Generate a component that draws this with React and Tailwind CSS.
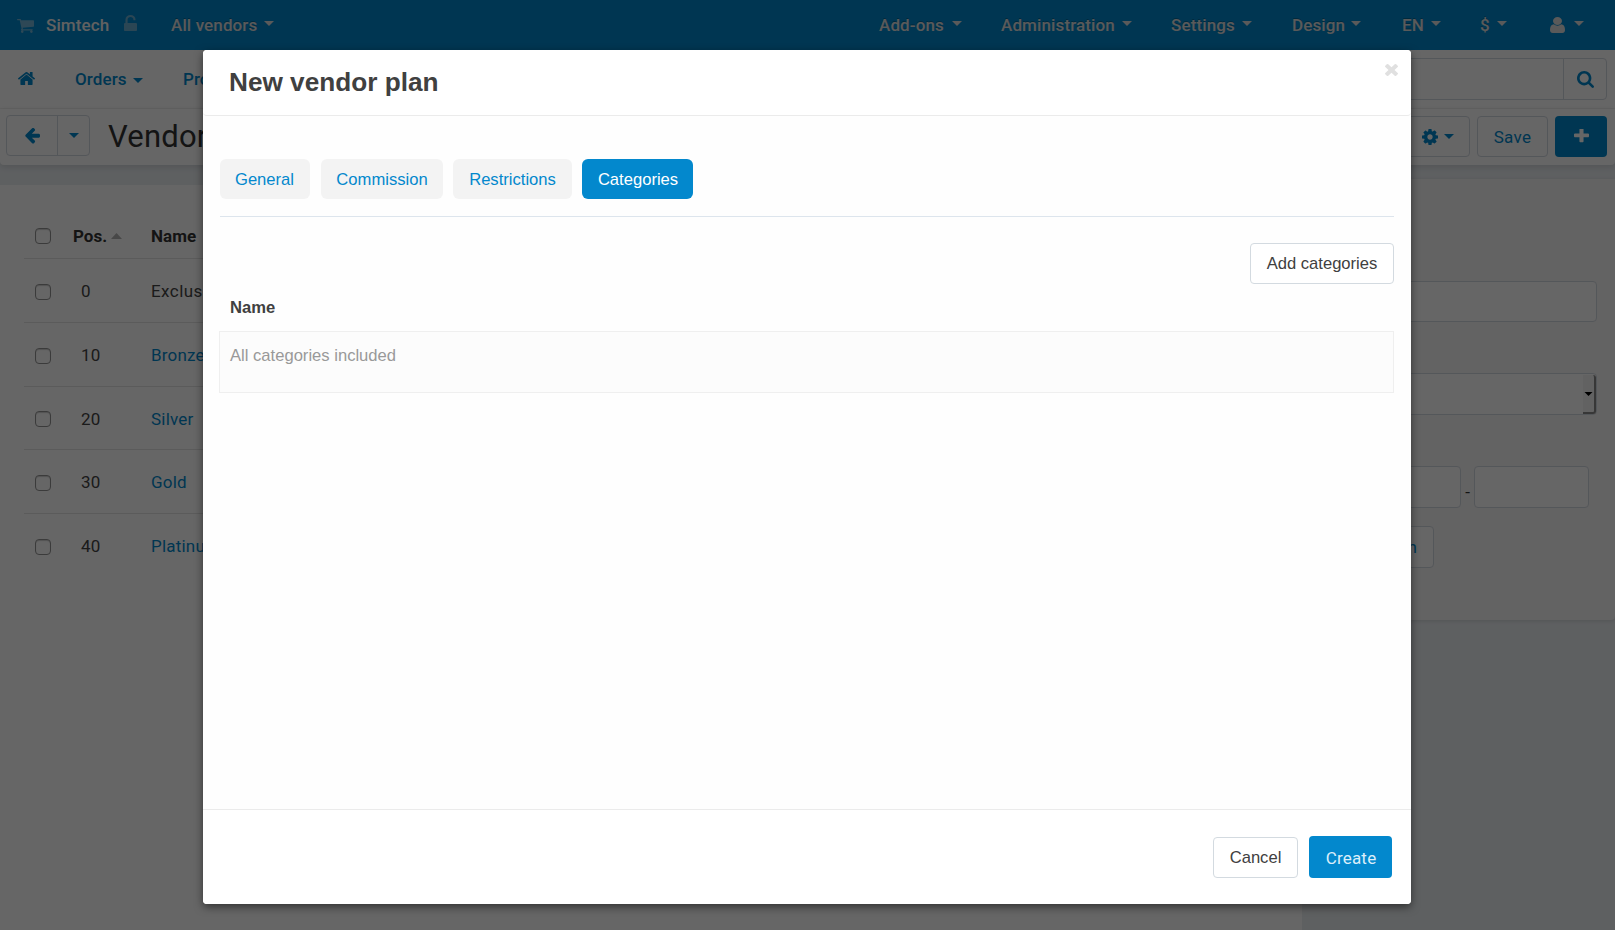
import React from "react";

const PATHS = {
  home: "M1472 992v480q0 26-19 45t-45 19h-384v-384h-256v384h-384q-26 0-45-19t-19-45v-480q0-1 .5-3t.5-3l575-474 575 474q1 2 1 6zm223-69l-62 74q-8 9-21 11h-3q-13 0-21-7l-692-577-692 577q-12 8-24 7-13-2-21-11l-62-74q-8-10-7-23.5t11-21.5l719-599q32-26 76-26t76 26l244 204v-195q0-14 9-23t23-9h192q14 0 23 9t9 23v408l219 182q10 8 11 21.5t-7 23.5z",
  plus: "M1600 736v192q0 40-28 68t-68 28h-416v416q0 40-28 68t-68 28h-192q-40 0-68-28t-28-68v-416h-416q-40 0-68-28t-28-68v-192q0-40 28-68t68-28h416v-416q0-40 28-68t68-28h192q40 0 68 28t28 68v416h416q40 0 68 28t28 68z",
  search: "M1216 832q0-185-131.5-316.5t-316.5-131.5-316.5 131.5-131.5 316.5 131.5 316.5 316.5 131.5 316.5-131.5 131.5-316.5zm512 832q0 52-38 90t-90 38q-54 0-90-38l-343-342q-179 124-399 124-143 0-273.5-55.5t-225-150-150-225-55.5-273.5 55.5-273.5 150-225 225-150 273.5-55.5 273.5 55.5 225 150 150 225 55.5 273.5q0 220-124 399l343 343q37 37 37 90z",
  back: "M1664 896v128q0 53-32.5 90.5t-84.5 37.5h-704l293 294q38 36 38 90t-38 90l-75 76q-37 37-90 37-52 0-91-37l-651-652q-37-37-37-90 0-52 37-91l651-650q38-38 91-38 52 0 90 38l75 74q38 38 38 91t-38 91l-293 293h704q52 0 84.5 37.5t32.5 90.5z",
  cog: "M1152 896q0-106-75-181t-181-75-181 75-75 181 75 181 181 75 181-75 75-181zm512-109v222q0 12-8 23t-20 13l-185 28q-19 54-39 91 35 50 107 138 10 12 10 25t-9 23q-27 37-99 108t-94 71q-12 0-26-9l-138-108q-44 23-91 38-16 136-29 186-7 28-36 28h-222q-14 0-24.5-8.5t-11.5-21.5l-28-184q-49-16-90-37l-141 107q-10 9-25 9-14 0-25-11-126-114-165-168-7-10-7-23 0-12 8-23 15-21 51-66.5t54-70.5q-27-50-41-99l-183-27q-13-2-21-12.5t-8-23.5v-222q0-12 8-23t19-13l186-28q14-46 39-92-40-57-107-138-10-12-10-24 0-10 9-23 26-36 98.5-107.5t94.5-71.5q13 0 26 10l138 107q44-23 91-38 16-136 29-186 7-28 36-28h222q14 0 24.5 8.500t11.5 21.5l28 184q49 16 90 37l142-107q9-9 24-9 13 0 25 10 129 119 165 170 7 8 7 22 0 12-8 23-15 21-51 66.5t-54 70.5q26 50 41 98l183 28q13 2 21 12.5t8 23.5z",
  user: "M1536 1399q0 109-62.5 187t-150.5 78h-854q-88 0-150.5-78t-62.5-187q0-85 8.5-160.5t31.5-152 58.5-131 94-89 134.5-34.5q131 128 313 128t313-128q76 0 134.5 34.5t94 89 58.5 131 31.5 152 8.5 160.5zm-256-887q0 159-112.5 271.5t-271.5 112.5-271.5-112.5-112.5-271.5 112.5-271.5 271.5-112.5 271.5 112.5 112.5 271.5z",
  cart: "M704 1536q0 52-38 90t-90 38-90-38-38-90 38-90 90-38 90 38 38 90zm896 0q0 52-38 90t-90 38-90-38-38-90 38-90 90-38 90 38 38 90zm128-1088v512q0 24-16.5 42.5t-40.5 21.5l-1044 122q13 60 13 70 0 16-24 64h920q26 0 45 19t19 45-19 45-45 19h-1024q-26 0-45-19t-19-45q0-11 8-31.5t16-36 21.5-40 15.5-29.5l-177-823h-204q-26 0-45-19t-19-45 19-45 45-19h256q16 0 28.5 6.5t19.5 15.5 13 24.5 8 26 5.5 29.5 4.5 26h1201q26 0 45 19t19 45z",
  unlock: "M1376 768q40 0 68 28t28 68v576q0 40-28 68t-68 28h-960q-40 0-68-28t-28-68v-576q0-40 28-68t68-28h32v-320q0-185 131.5-316.5t316.5-131.5 316.5 131.5 131.5 316.5q0 26-19 45t-45 19h-64q-26 0-45-19t-19-45q0-106-75-181t-181-75-181 75-75 181v320h736z",
  times: "M1490 1322q0 40-28 68l-136 136q-28 28-68 28t-68-28l-294-294-294 294q-28 28-68 28t-68-28l-136-136q-28-28-28-68t28-68l294-294-294-294q-28-28-28-68t28-68l136-136q28-28 68-28t68 28l294 294 294-294q28-28 68-28t68 28l136 136q28 28 28 68t-28 68l-294 294 294 294q28 28 28 68z",
};

function Icon({ name, className, box = "0 0 1792 1792" }) {
  return (
    <svg viewBox={box} preserveAspectRatio="none" fill="currentColor" className={`shrink-0 ${className}`}>
      <path d={PATHS[name]} />
    </svg>
  );
}

function Caret({ className = "" }) {
  return (
    <svg viewBox="0 0 10 5" className={`h-[5px] w-[10px] shrink-0 ${className}`} fill="currentColor">
      <path d="M0 0h10L5 5z" />
    </svg>
  );
}

function MenuItem({ className, children }) {
  return (
    <div className={`flex shrink-0 items-center justify-between whitespace-nowrap ${className}`}>
      <span className="pt-[2px] [text-shadow:0_-1px_0_rgba(0,0,0,0.25)]">{children}</span>
      <Caret className="-mt-[3px]" />
    </div>
  );
}

function TopBar() {
  return (
    <header className="flex h-[50px] items-center bg-[#0088cc] text-[17px] font-medium tracking-[0.12px] text-[#e0e0e0]">
      <Icon name="cart" box="64 256 1664 1408" className="ml-[17px] mt-px h-[14px] w-[17px] text-[#73b5d8]" />
      <span className="ml-[12px] w-[78px] pt-[2px] text-[#f2f2f2]">Simtech</span>
      <Icon name="unlock" box="320 0 1152 1536" className="-mt-[4px] h-[16px] w-[13px] text-[#6baed2]" />
      <MenuItem className="ml-[34px] w-[103px]">All vendors</MenuItem>
      <MenuItem className="ml-[605px] w-[83px]">Add-ons</MenuItem>
      <MenuItem className="ml-[39px] w-[131px]">Administration</MenuItem>
      <MenuItem className="ml-[39px] w-[81px]">Settings</MenuItem>
      <MenuItem className="ml-[40px] w-[69px]">Design</MenuItem>
      <MenuItem className="ml-[41px] w-[39px]">EN</MenuItem>
      <MenuItem className="ml-[39px] w-[27px]">$</MenuItem>
      <Icon name="user" box="256 128 1280 1536" className="-mt-px ml-[43px] h-[16px] w-[15px]" />
      <Caret className="-mt-[3px] ml-[9px]" />
    </header>
  );
}

function SubBar() {
  return (
    <div className="flex h-[59px] items-center border-b border-[#f2f2f2] bg-white text-[17px] font-medium tracking-[0.1px] text-[#0088cc]">
      <Icon name="home" box="89 253 1614 1283" className="-mt-px ml-[18px] h-[13px] w-[17px]" />
      <div className="ml-[40px] flex w-[68px] items-center justify-between">
        <span className="pt-[2px]">Orders</span>
        <Caret className="mt-[2px]" />
      </div>
      <span className="ml-[40px] pt-[2px]">Products</span>
      <div className="ml-auto mr-[8px] flex h-[42px] w-[400px] rounded border border-[#d3d9e0]">
        <div className="flex-1" />
        <div className="flex w-[43px] items-center justify-center border-l border-[#d3d9e0]">
          <Icon name="search" box="64 128 1664 1664" className="h-[17px] w-[17px]" />
        </div>
      </div>
    </div>
  );
}

function Toolbar() {
  return (
    <div className="flex h-[56px] items-start rounded-b bg-white pt-[6px] text-[#0088cc] shadow-[0_2px_6px_rgba(0,0,0,0.12)]">
      <div className="ml-[6px] flex h-[41px] w-[84px] rounded border border-[#d3d9e0]">
        <div className="flex w-[50px] items-center justify-center pt-px">
          <Icon name="back" box="64 189 1600 1600" className="h-[16px] w-[16px]" />
        </div>
        <div className="flex flex-1 items-center justify-center border-l border-[#d3d9e0]">
          <Caret />
        </div>
      </div>
      <h1 className="ml-[18px] mt-[3px] whitespace-nowrap text-[31px] leading-[38px] tracking-[0.2px] text-[#333333]">Vendor plans</h1>
      <div className="ml-auto mr-[8px] mt-[1px] flex h-[41px] text-[17px]">
        <div className="flex w-[72px] items-center justify-end rounded border border-[#d3d9e0] pr-[15px]">
          <Icon name="cog" box="128 128 1536 1536" className="h-[16px] w-[16px]" />
          <Caret className="ml-[6px]" />
        </div>
        <div className="ml-[7px] flex w-[71px] items-center justify-center rounded border border-[#d3d9e0] pt-[2px] tracking-[0.3px]">Save</div>
        <div className="ml-[7px] flex w-[52px] items-center justify-center rounded bg-[#0088cc] text-white">
          <Icon name="plus" box="192 192 1408 1408" className="-mt-px h-[14px] w-[15px]" />
        </div>
      </div>
    </div>
  );
}

function Check({ className = "" }) {
  return (
    <span
      className={`h-[16px] w-[16px] shrink-0 rounded-[4px] border-[1.5px] border-[#949494] bg-white shadow-[inset_0_1px_1px_rgba(0,0,0,0.2)] ${className}`}
    />
  );
}

const PLANS = [
  { pos: 0, name: "Exclusive", color: "text-[#444444] tracking-[0.45px]", height: "h-[64px]", check: "mt-[3px]", text: "pt-[2px]" },
  { pos: 10, name: "Bronze", color: "text-[#0088cc]", height: "h-[64px]", check: "mt-[3px]", text: "pt-[2px]" },
  { pos: 20, name: "Silver", color: "text-[#0088cc]", height: "h-[63px]", check: "mt-[2px]", text: "pt-[3px]" },
  { pos: 30, name: "Gold", color: "text-[#0088cc]", height: "h-[64px]", check: "mt-[3px]", text: "pt-[2px]" },
  { pos: 40, name: "Platinum", color: "text-[#0088cc]", height: "h-[64px]", check: "mt-[2px]", text: "pt-[2px]" },
];

function PlansTable() {
  return (
    <main className="mt-[20px] w-[1302px] bg-white pl-[24px] pt-[28px] text-[17px] tracking-[0.2px] text-[#444444]">
      <div className="flex h-[46px] items-center border-b border-[#e3e3e3] pl-[11px] font-bold tracking-normal text-[#333333]">
        <Check />
        <span className="ml-[22px] pt-[2px]">Pos.</span>
        <svg viewBox="0 0 11 6" className="ml-[4px] h-[6px] w-[11px] text-[#b3b3b3]" fill="currentColor">
          <path d="M0 6h11L5.500 0z" />
        </svg>
        <span className="ml-[29px] pt-[2px]">Name</span>
      </div>
      {PLANS.map((p, i) => (
        <div key={p.pos} className={`flex items-center pl-[11px] ${p.height} ${i < 4 ? "border-b border-[#e3e3e3]" : ""}`}>
          <Check className={p.check} />
          <span className={`ml-[30px] w-[70px] ${p.text}`}>{p.pos}</span>
          <span className={`${p.text} ${p.color}`}>{p.name}</span>
        </div>
      ))}
    </main>
  );
}

function SearchPanel() {
  return (
    <aside className="mt-[14px] h-[441px] w-[313px] rounded-b bg-[#f7f7f7] pt-[102px] shadow-[0_1px_4px_rgba(0,0,0,0.12)]">
      <div className="mr-[18px] h-[41px] rounded border border-[#d3d9e0] bg-white" />
      <div className="mr-[18px] mt-[51px] flex h-[42px] justify-end rounded border border-[#d3d9e0] bg-white pt-[1px]">
        <div className="flex w-[13px] items-center justify-center rounded-r-[3px] border-b-2 border-r-2 border-[#8a8a8a] bg-[#f5f5f5]">
          <svg viewBox="0 0 10 5" className="h-[4px] w-[9px]" fill="#000">
            <path d="M0 0h10L5 5z" />
          </svg>
        </div>
      </div>
      <div className="mt-[51px] flex justify-end pr-[26px]">
        <div className="h-[42px] w-[116px] rounded border border-[#d3d9e0] bg-white" />
        <span className="w-[13px] pt-[14px] text-center text-[17px] text-[#333333]">-</span>
        <div className="h-[42px] w-[115px] rounded border border-[#d3d9e0] bg-white" />
      </div>
      <div className="ml-[44px] mt-[18px] flex h-[42px] w-[88px] items-center justify-end rounded border border-[#d3d9e0] bg-white pr-[16px] pt-[2px] text-[17px] text-[#0088cc]">
        Search
      </div>
    </aside>
  );
}

function Tab({ className, active, children }) {
  return (
    <div
      className={`flex h-[40px] items-center justify-center rounded-[6px] pt-[2px] ${
        active ? "bg-[#0388cd] text-white" : "bg-[#f3f3f3] text-[#0388cd]"
      } ${className}`}
    >
      {children}
    </div>
  );
}

function PlanDialog() {
  return (
    <section
      role="dialog"
      className="absolute left-[203px] top-[50px] flex h-[854px] w-[1208px] flex-col rounded bg-[#fefefe] font-['Liberation_Sans',sans-serif] text-[16.6px] text-[#404040] shadow-[0_3px_9px_rgba(0,0,0,0.5)]"
    >
      <div className="flex h-[66px] items-start justify-between rounded border-b border-[#ebebeb] bg-white">
        <h2 className="ml-[26px] mt-[16px] text-[26.2px] font-bold leading-[32px]">New vendor plan</h2>
        <Icon name="times" box="302 366 1188 1188" className="mr-[13px] mt-[14px] h-[12px] w-[13px] text-[#e0e0e0]" />
      </div>
      <div className="mx-[17px] flex h-[101px] border-b border-[#dde5ed] pt-[43px]">
        <Tab className="w-[90px] pr-px">General</Tab>
        <Tab className="ml-[11px] w-[122px]">Commission</Tab>
        <Tab className="ml-[10px] w-[119px]">Restrictions</Tab>
        <Tab active className="ml-[10px] w-[111px] pl-px">Categories</Tab>
      </div>
      <div className="mr-[17px] mt-[26px] flex h-[41px] w-[144px] items-center justify-center self-end rounded border border-[#d3dae0] bg-white pt-[2px]">
        Add categories
      </div>
      <div className="ml-[27px] mt-[14px] h-[33px] font-bold leading-[19px]">Name</div>
      <div className="ml-[16px] mr-[17px] h-[62px] border border-[#efefef] bg-[#fcfcfc] pl-[10px] pt-[14px] leading-[19px] text-[#999999]">
        All categories included
      </div>
      <div className="mt-auto flex h-[95px] items-start justify-end rounded-b border-t border-[#ebebeb] bg-white pr-[19px] pt-[26px]">
        <div className="mt-px flex h-[41px] w-[85px] items-center justify-center rounded border border-[#d3dae0] pt-[2px]">Cancel</div>
        <div className="ml-[11px] flex h-[42px] w-[83px] items-center justify-center rounded bg-[#0388cd] pl-px pt-[3px] font-[Roboto,sans-serif] text-[17px] tracking-[0.2px] text-[#dceefa]">
          Create
        </div>
      </div>
    </section>
  );
}

export default function App() {
  return (
    <div className="relative flex h-[930px] w-[1615px] flex-col overflow-hidden bg-[#ebeff3] font-[Roboto,sans-serif]">
      <TopBar />
      <SubBar />
      <Toolbar />
      <div className="flex flex-1 items-stretch">
        <PlansTable />
        <SearchPanel />
      </div>
      <div className="absolute inset-0 bg-black/60" />
      <PlanDialog />
    </div>
  );
}
